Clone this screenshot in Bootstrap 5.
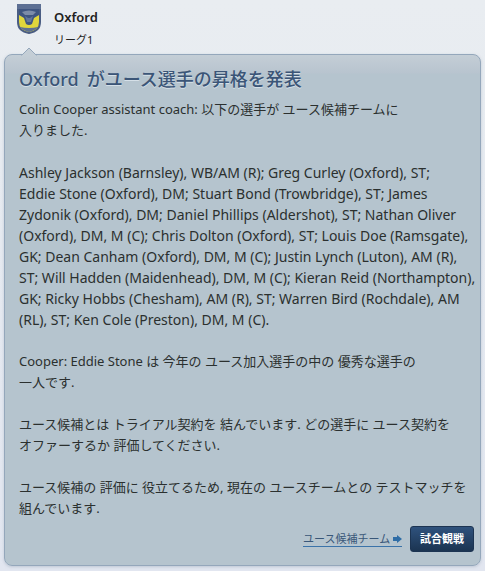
<!DOCTYPE html>
<html lang="ja">
<head>
<meta charset="utf-8">
<meta name="viewport" content="width=device-width, initial-scale=1">
<title>Oxford</title>
<link href="https://cdn.jsdelivr.net/npm/bootstrap@5.3.0/dist/css/bootstrap.min.css" rel="stylesheet">
<style>
body{background:linear-gradient(#e9edf1,#e2e6f0) no-repeat #e2e6f0;font-family:"Noto Sans","Noto Sans CJK JP",sans-serif;font-size:13px;line-height:21px;color:#2b302f}
.club-head{padding:4px 16px 0;gap:12px;height:54px}
.club-name{font-size:13px;line-height:27px;color:#222;font-weight:600}
.club-league{font-size:11px;line-height:17px;color:#222}
.bubble{margin:0 4px 4px;padding:10px 2px 13px 14px;border:1px solid #94a7bb;border-radius:8px;background:linear-gradient(#c4ced6,#b8c4cf 18px,#b5c4ce 19px);box-shadow:0 1px 3px #a5b2c299}
.bubble-tip{position:absolute;left:16px;top:-8px}
.bubble h1{font-size:18px;line-height:28px;color:#3b5577;font-weight:500;margin:0 0 6px;text-shadow:0 1px 0 #d5e0e8}
.bubble p{margin:0 0 21px}
.bubble .player-list{font-size:14px}
.bubble .intro-end{margin-bottom:7px}
.team-link{font-size:11px;line-height:15px;color:#395779;border-bottom:1px solid #3b73a9}
.watch-btn{font-size:11px;line-height:16px;padding:4px 9px;color:#fff;font-weight:700;border:1px solid #1c3452;border-radius:3px;background:linear-gradient(#2f527d,#1b3451)}
.watch-btn:hover{color:#fff;background:#2f527d}
</style>
<script src="https://cdn.jsdelivr.net/npm/bootstrap@5.3.0/dist/js/bootstrap.bundle.min.js"></script>
</head>
<body>
<header class="club-head d-flex align-items-start">
<svg width="26" height="31" viewBox="0 0 26 31" aria-hidden="true">
<path d="M2 1H24V18C24 25 19 28 13 29C7 28 2 25 2 18Z" fill="#e0d63c" stroke="#4a5d83" stroke-width="2"/>
<path d="M1 0H25V5H1Z" fill="#5c6f93"/>
<path d="M3 5H23V11L18 14L16 20Q13 22 10 20L8 14L3 11Z" fill="#3f5580"/>
<path d="M6 8Q13 5 20 8L17 11H9Z" fill="#7c8ca9"/>
<path d="M9 12L12 14H14L17 12L15 18H11Z" fill="#62769a"/>
<path d="M4 23Q8 24 13 24T22 23Q20 26 13 28Q6 26 4 23Z" fill="#5d7093"/>
</svg>
<div><div class="club-name">Oxford</div><div class="club-league">リーグ1</div></div>
</header>
<main class="bubble position-relative">
<svg class="bubble-tip" width="16" height="9" viewBox="0 0 16 9" aria-hidden="true"><path d="M0 9L1 8L8 1L15 8L16 9Z" fill="#c4ced6"/><path d="M0 8H1L8 1L15 8H16" fill="none" stroke="#94a7bb"/></svg>
<h1><span class="me-2">Oxford</span>がユース選手の昇格を発表</h1>
<p>Colin Cooper assistant coach: 以下の選手が ユース候補チームに<br>入りました.</p>
<p class="player-list">Ashley Jackson (Barnsley), WB/AM (R); Greg Curley (Oxford), ST;<br>Eddie Stone (Oxford), DM; Stuart Bond (Trowbridge), ST; James<br>Zydonik (Oxford), DM; Daniel Phillips (Aldershot), ST; Nathan Oliver<br>(Oxford), DM, M (C); Chris Dolton (Oxford), ST; Louis Doe (Ramsgate),<br>GK; Dean Canham (Oxford), DM, M (C); Justin Lynch (Luton), AM (R),<br>ST; Will Hadden (Maidenhead), DM, M (C); Kieran Reid (Northampton),<br>GK; Ricky Hobbs (Chesham), AM (R), ST; Warren Bird (Rochdale), AM<br>(RL), ST; Ken Cole (Preston), DM, M (C).</p>
<p>Cooper: Eddie Stone は 今年の ユース加入選手の中の 優秀な選手の<br>一人です.</p>
<p>ユース候補とは トライアル契約を 結んでいます. どの選手に ユース契約を<br>オファーするか 評価してください.</p>
<p class="intro-end">ユース候補の 評価に 役立てるため, 現在の ユースチームとの テストマッチを<br>組んでいます.</p>
<div class="d-flex justify-content-end align-items-center gap-2 me-1">
<a class="team-link text-decoration-none" href="#">ユース候補チーム <svg width="9" height="8" viewBox="0 0 9 8" class="align-baseline" aria-hidden="true"><path d="M0 2H4V0L9 4L4 8V6H0Z" fill="#2f6da6"/></svg></a>
<button type="button" class="btn watch-btn">試合観戦</button>
</div>
</main>
</body>
</html>
